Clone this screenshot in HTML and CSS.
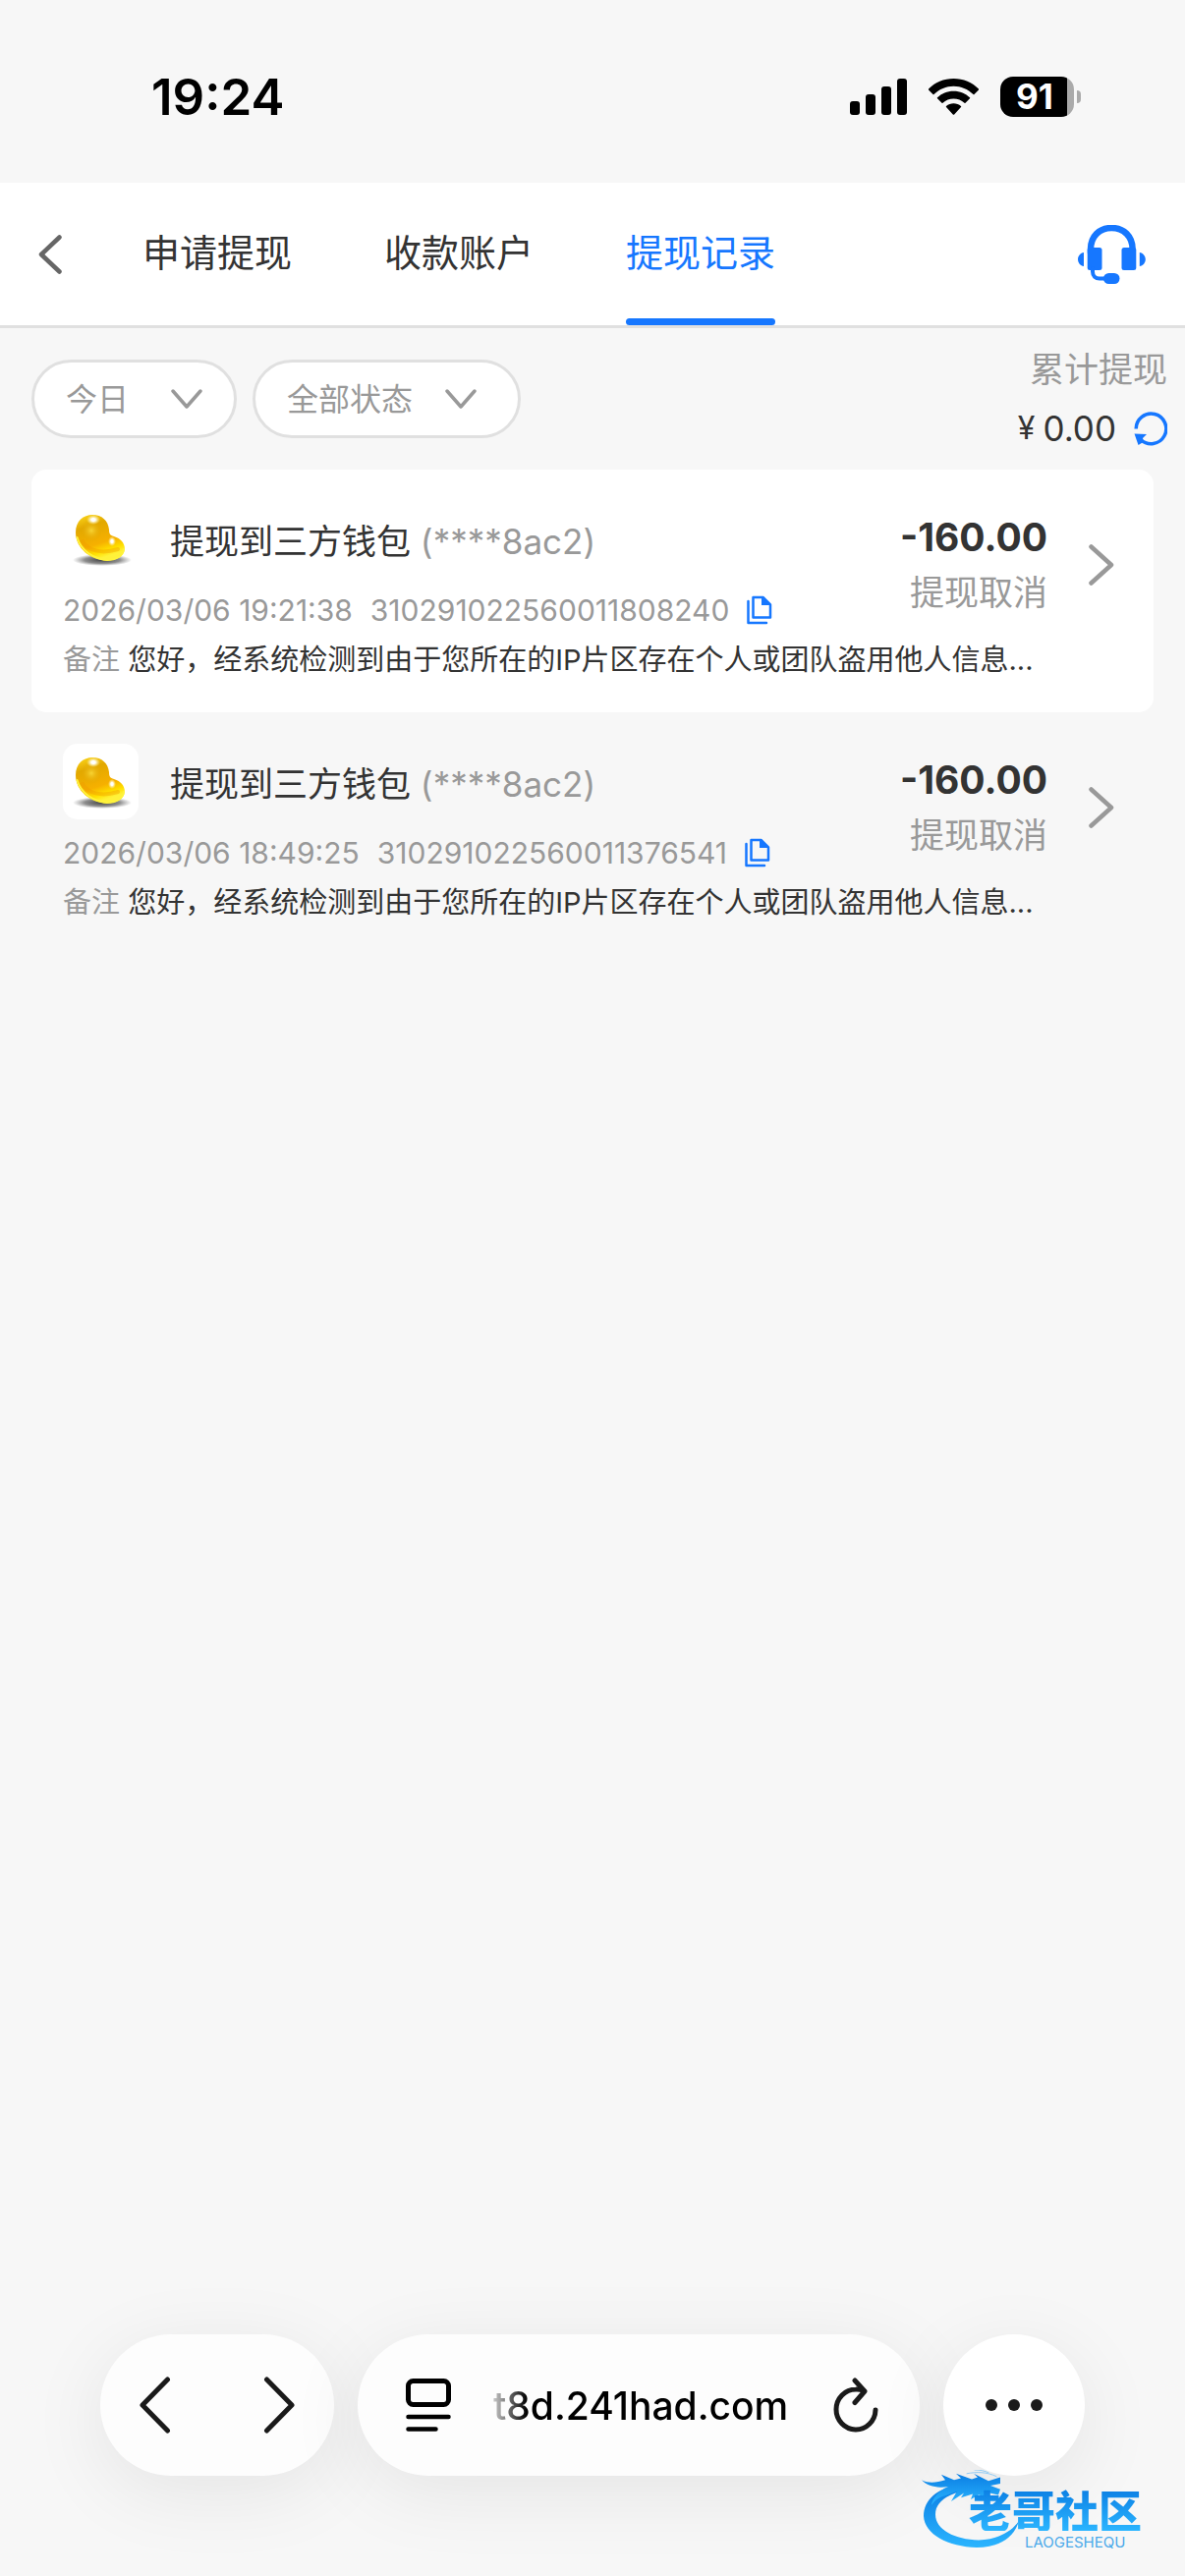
FILE: index.html
```html
<!DOCTYPE html>
<html lang="zh-CN">
<head>
  <meta charset="UTF-8">
  <meta name="viewport" content="width=device-width, initial-scale=1">
  <title>提现记录</title>
  <link rel="stylesheet" href="styles.css">
</head>
<body>

  <div class="status-bar">
    <span class="time">19:24</span>
    <div class="status-icons">
      <svg width="58" height="37" viewBox="0 0 58 37">
        <rect x="0" y="23" width="10" height="14" rx="3"/>
        <rect x="16" y="16" width="10" height="21" rx="3"/>
        <rect x="32" y="8" width="10" height="29" rx="3"/>
        <rect x="48" y="0" width="10" height="37" rx="3"/>
      </svg>
      <svg width="51" height="37" viewBox="0 0 51 37">
        <path d="M25.500 0C35.500 0 44.500 4 51 10.500Q51.400 11 51 11.500L46.500 16Q46 16.400 45.500 16C40 10.700 33 7.700 25.500 7.700S11 10.700 5.500 16Q5 16.400 4.500 16L0 11.500Q-.4 11 0 10.500C6.500 4 15.500 0 25.500 0Z"/>
        <path d="M25.500 12.700C32 12.700 37.800 15.200 42 19.300Q42.500 19.800 42 20.300L37.500 24.800Q37 25.200 36.500 24.800C33.500 22 29.700 20.500 25.500 20.500S17.500 22 14.500 24.800Q14 25.200 13.500 24.800L9 20.300Q8.500 19.800 9 19.300C13.200 15.200 19 12.700 25.500 12.700Z"/>
        <path d="M25.500 25.300C28.300 25.300 30.900 26.300 33 28Q33.500 28.500 33 29L26.200 36.400Q25.500 37 24.800 36.400L18 29Q17.500 28.500 18 28C20.100 26.300 22.700 25.300 25.500 25.300Z"/>
      </svg>
      <div class="battery"><span>91</span></div>
    </div>
  </div>

  <header class="header">
    <button class="back" aria-label="返回">
      <svg width="24" height="40" viewBox="0 0 24 40"><path d="M21.500 2.500L3 20l18.500 17.500" stroke="#666" stroke-width="4.500"/></svg>
    </button>
    <nav class="tabs">
      <a href="#apply">申请提现</a>
      <a href="#account">收款账户</a>
      <a href="#records" class="active">提现记录</a>
    </nav>
    <button class="service" aria-label="客服">
      <svg width="69" height="60" viewBox="0 0 69 60">
        <path d="M13 28V24.500C13 11.500 22 3 34.300 3S55.600 11.500 55.600 24.500V28" stroke="#1677ff" stroke-width="6.500"/>
        <g fill="#1677ff">
          <rect x="9.700" y="23" width="14.800" height="23" rx="2.500"/>
          <rect x="44.500" y="23" width="14.800" height="23" rx="2.500"/>
          <path d="M6 28v14C2.500 41.500 0 38.500 0 35s2.500-6.500 6-7zM62.800 28v14c3.500-.5 6-3.500 6-7s-2.500-6.500-6-7z"/>
          <rect x="26" y="49" width="16.500" height="11" rx="5.500"/>
        </g>
        <path d="M15 44v3.500c0 4.500 3 7 7 7h7" stroke="#1677ff" stroke-width="4"/>
      </svg>
    </button>
  </header>

  <main>
    <div class="filter-bar">
      <div class="select-box">
        <select aria-label="日期"><option>今日</option></select>
        <svg width="32" height="20" viewBox="0 0 32 20"><path d="M2 2l14 16L30 2" stroke="#999" stroke-width="3.500"/></svg>
      </div>
      <div class="select-box select-status">
        <select aria-label="状态"><option>全部状态</option></select>
        <svg width="32" height="20" viewBox="0 0 32 20"><path d="M2 2l14 16L30 2" stroke="#999" stroke-width="3.500"/></svg>
      </div>
      <div class="total">
        <div class="total-label">累计提现</div>
        <div class="total-value">
          <span class="currency">¥</span><span>0.00</span>
          <button aria-label="刷新">
            <svg width="34" height="36" viewBox="0 0 34 36">
              <path d="M2.200 18.500A15.300 15.300 0 1 1 7 29.500" stroke="#1677ff" stroke-width="3.500" stroke-linecap="butt"/>
              <path d="M.5 23.500l12.500.5-4 4 .5 4-5 3z" fill="#1677ff"/>
            </svg>
          </button>
        </div>
      </div>
    </div>

    <article class="record record-white">
      <div class="record-top">
        <div class="record-info">
          <div class="record-title">
            <div class="coin">
              <svg width="77" height="77" viewBox="0 0 77 77">
                <defs>
                  <linearGradient id="gold" x1="0" y1="0" x2=".35" y2="1">
                    <stop offset="0" stop-color="#ffdc1e"/>
                    <stop offset=".3" stop-color="#e2a800"/>
                    <stop offset=".7" stop-color="#f6b000"/>
                    <stop offset=".88" stop-color="#ffe000"/>
                    <stop offset="1" stop-color="#fff23a"/>
                  </linearGradient>
                  <radialGradient id="glow">
                    <stop offset="0" stop-color="#f8d433"/>
                    <stop offset="1" stop-color="#e0a400" stop-opacity="0"/>
                  </radialGradient>
                  <radialGradient id="shine">
                    <stop offset=".3" stop-color="#fff"/>
                    <stop offset="1" stop-color="#fff3a0" stop-opacity="0"/>
                  </radialGradient>
                  <radialGradient id="shade">
                    <stop offset="0" stop-color="#222" stop-opacity=".85"/>
                    <stop offset=".6" stop-color="#333" stop-opacity=".55"/>
                    <stop offset="1" stop-color="#555" stop-opacity="0"/>
                  </radialGradient>
                </defs>
                <ellipse cx="40" cy="60" rx="30" ry="6" fill="url(#shade)"/>
                <path d="M13 32C13 20 21 14 30 14C40 14 46 20 47 29C47 33 48 35 52 36C59 38 63 43 63 49C62 57 54 61 45 61C28 60 13 48 13 32Z" fill="url(#gold)"/>
                <path d="M14.500 37C18 50 31 59 45 59.500C54 59.500 61 56 62 49" stroke="#fff33c" stroke-width="2"/>
                <path d="M20 41C26 51 40 54 56 49" stroke="#ef9a00" stroke-width="4" opacity=".4"/>
                <circle cx="29" cy="30" r="11" fill="url(#glow)"/>
                <ellipse cx="31" cy="19" rx="7" ry="5" fill="url(#shine)"/>
                <ellipse cx="50" cy="41" rx="4" ry="5" fill="url(#shine)"/>
              </svg>
            </div>
            <h2>提现到三方钱包 <span>(****8ac2)</span></h2>
          </div>
          <div class="record-meta">
            <span>2026/03/06 19:21:38</span>
            <span>310291022560011808240</span>
            <button aria-label="复制">
              <svg width="26" height="30" viewBox="0 0 26 30">
                <path d="M1.500 6V28H20" stroke="#1677ff" stroke-width="2.500"/>
                <path d="M6.500 2V22.500H24V9.500L16.500 2Z" stroke="#1677ff" stroke-width="2.500"/>
                <path d="M15 1V10H25Z" fill="#1677ff"/>
              </svg>
            </button>
          </div>
        </div>
        <div class="record-amount">
          <strong>-160.00</strong>
          <span>提现取消</span>
        </div>
        <svg class="arrow" width="26" height="42" viewBox="0 0 26 42"><path d="M2.500 2.500L23 21L2.500 39.500" stroke="#999" stroke-width="4.500"/></svg>
      </div>
      <p class="remark"><span>备注</span> 您好，经系统检测到由于您所在的IP片区存在个人或团队盗用他人信息...</p>
    </article>

    <article class="record">
      <div class="record-top">
        <div class="record-info">
          <div class="record-title">
            <div class="coin">
              <svg width="77" height="77" viewBox="0 0 77 77">
                <ellipse cx="40" cy="60" rx="30" ry="6" fill="url(#shade)"/>
                <path d="M13 32C13 20 21 14 30 14C40 14 46 20 47 29C47 33 48 35 52 36C59 38 63 43 63 49C62 57 54 61 45 61C28 60 13 48 13 32Z" fill="url(#gold)"/>
                <path d="M14.500 37C18 50 31 59 45 59.500C54 59.500 61 56 62 49" stroke="#fff33c" stroke-width="2"/>
                <path d="M20 41C26 51 40 54 56 49" stroke="#ef9a00" stroke-width="4" opacity=".4"/>
                <circle cx="29" cy="30" r="11" fill="url(#glow)"/>
                <ellipse cx="31" cy="19" rx="7" ry="5" fill="url(#shine)"/>
                <ellipse cx="50" cy="41" rx="4" ry="5" fill="url(#shine)"/>
              </svg>
            </div>
            <h2>提现到三方钱包 <span>(****8ac2)</span></h2>
          </div>
          <div class="record-meta">
            <span>2026/03/06 18:49:25</span>
            <span>310291022560011376541</span>
            <button aria-label="复制">
              <svg width="26" height="30" viewBox="0 0 26 30">
                <path d="M1.500 6V28H20" stroke="#1677ff" stroke-width="2.500"/>
                <path d="M6.500 2V22.500H24V9.500L16.500 2Z" stroke="#1677ff" stroke-width="2.500"/>
                <path d="M15 1V10H25Z" fill="#1677ff"/>
              </svg>
            </button>
          </div>
        </div>
        <div class="record-amount">
          <strong>-160.00</strong>
          <span>提现取消</span>
        </div>
        <svg class="arrow" width="26" height="42" viewBox="0 0 26 42"><path d="M2.500 2.500L23 21L2.500 39.500" stroke="#999" stroke-width="4.500"/></svg>
      </div>
      <p class="remark"><span>备注</span> 您好，经系统检测到由于您所在的IP片区存在个人或团队盗用他人信息...</p>
    </article>
  </main>

  <footer class="browser-bar">
    <div class="pill pill-nav">
      <button aria-label="后退">
        <svg width="32" height="58" viewBox="0 0 32 58"><path d="M28.500 3L3 29l25.500 26" stroke="#1a1a1a" stroke-width="5"/></svg>
      </button>
      <button aria-label="前进">
        <svg width="32" height="58" viewBox="0 0 32 58"><path d="M3.500 3L29 29L3.500 55" stroke="#1a1a1a" stroke-width="5"/></svg>
      </button>
    </div>
    <div class="pill pill-url">
      <button aria-label="页面菜单">
        <svg width="46" height="54" viewBox="0 0 46 54">
          <rect x="2.500" y="2.500" width="41" height="24" rx="5" stroke="#000" stroke-width="5"/>
          <path d="M2.500 39H43.500M2.500 51.500H30.500" stroke="#000" stroke-width="4.500"/>
        </svg>
      </button>
      <input type="text" value="t8d.241had.com" aria-label="网址">
      <button aria-label="重新加载">
        <svg width="46" height="56" viewBox="0 0 46 56">
          <path d="M31 13.500C28.500 12.400 25.800 11.800 23 12A20 20.500 0 1 0 43 33" stroke="#1a1a1a" stroke-width="5"/>
          <path d="M22 3L32 14L22 25.500" stroke="#1a1a1a" stroke-width="5"/>
        </svg>
      </button>
    </div>
    <button class="pill pill-more" aria-label="更多">
      <svg width="58" height="12" viewBox="0 0 58 12"><g fill="#1a1a1a"><circle cx="6" cy="6" r="6"/><circle cx="29" cy="6" r="6"/><circle cx="52" cy="6" r="6"/></g></svg>
    </button>
  </footer>

  <div class="watermark">
    <svg width="100" height="80" viewBox="0 0 100 85" preserveAspectRatio="none">
      <defs>
        <linearGradient id="blue" x1="0" y1="0" x2="0" y2="1">
          <stop offset="0" stop-color="#0a7de3"/>
          <stop offset="1" stop-color="#2bb5ff"/>
        </linearGradient>
      </defs>
      <g fill="url(#blue)">
        <path d="M30 18C12 23 2 35 2 50C3 70 27 83 56 84C78 84 94 74 99 55C91 68 76 75 58 76C34 75 14 65 14 48C14 35 26 26 45 22Z"/>
        <path d="M0 11C7 15 15 14 24 11L20 5L33 11L40 9L35 4L51 10L57 8L53 4L68 12L80 8V15L70 17L80 21L78 27L65 24L72 31L58 27L50 32L52 26L40 30L43 25L30 34L36 23L24 28C18 29 14 33 10 38C11 30 18 22 27 18C16 20 6 18 0 11Z"/>
      </g>
      <path d="M46 4C56 2 66 2 76 7M54 0C60 0 64 1 68 3" stroke="#8fcaf5" stroke-width="1"/>
    </svg>
    <div class="watermark-text">
      <b>老哥社区</b>
      <small>LAOGESHEQU</small>
    </div>
  </div>

</body>
</html>
```

FILE: styles.css
```css
* { box-sizing: border-box; }
body {
  margin: 0;
  min-height: 100vh;
  display: flex;
  flex-direction: column;
  position: relative;
  background: #f7f7f7;
  color: #333;
  font-family: Inter, "Noto Sans CJK SC", sans-serif;
  font-size: 35px;
}
svg { display: block; flex-shrink: 0; fill: none; stroke-linecap: round; stroke-linejoin: round; }
button { padding: 0; border: none; background: none; font: inherit; cursor: pointer; }
main { flex: 1; }

/* status bar */
.status-bar {
  height: 186px;
  padding: 10px 113px 0 154px;
  display: flex;
  align-items: center;
  justify-content: space-between;
  color: #000;
}
.time { font-size: 51px; font-weight: 600; }
.status-icons { display: flex; align-items: center; gap: 22px; }
.status-icons svg { fill: #000; }
.battery {
  position: relative;
  width: 75px;
  height: 41px;
  padding-right: 5px;
  border-radius: 13px;
  background: linear-gradient(to right, #000 68px, #aaa 68px);
  color: #fff;
  font-size: 35px;
  font-weight: 700;
  line-height: 41px;
  text-align: center;
}
.battery::after {
  content: "";
  position: absolute;
  right: -7px;
  top: 14px;
  width: 4px;
  height: 13px;
  border-radius: 0 4px 4px 0;
  background: #aaa;
}

/* header */
.header {
  height: 148px;
  padding: 0 40px 0 39px;
  display: flex;
  align-items: center;
  background: #fff;
  border-bottom: 3px solid #e0e0e0;
}
.tabs { flex: 1; align-self: stretch; display: flex; gap: 94px; margin-left: 82px; }
.tabs a {
  position: relative;
  display: flex;
  align-items: center;
  padding-bottom: 8px;
  color: #333;
  font-size: 38px;
  text-decoration: none;
}
.tabs a.active { color: #1677ff; }
.tabs a.active::after {
  content: "";
  position: absolute;
  left: 0;
  right: 0;
  bottom: 0;
  height: 7px;
  border-radius: 4px;
  background: #1677ff;
}

/* filters */
.filter-bar { display: flex; align-items: center; gap: 16px; padding: 12px 18px 12px 32px; }
.select-box { position: relative; }
.select-box select {
  appearance: none;
  display: block;
  height: 80px;
  padding: 0 106px 0 32px;
  border: 3px solid #e0e0e0;
  border-radius: 40px;
  background: #fff;
  color: #999;
  font: inherit;
  font-size: 32px;
}
.select-box svg { position: absolute; right: 35px; top: 30px; pointer-events: none; }
.select-status svg { right: 45px; }
.total { margin-left: auto; text-align: right; line-height: 60px; }
.total-label { color: #999; }
.total-value { display: flex; align-items: center; justify-content: flex-end; }
.currency { margin-right: 8px; font-size: 32px; }
.total-value button { margin-left: 18px; }

/* records */
.record { margin: 0 32px; padding: 32px 40px 33px 32px; border-radius: 15px; }
.record-white { background: #fff; }
.record-top { display: flex; align-items: center; }
.record-info { flex: 1; min-width: 0; }
.record-title { display: flex; align-items: center; gap: 32px; }
.coin { border-radius: 15px; background: #fff; }
.record-title h2 { margin: 0; font-size: 35px; font-weight: 400; white-space: nowrap; }
.record-title h2 span { color: #999; }
.record-meta {
  display: flex;
  align-items: center;
  gap: 18px;
  margin-top: 15px;
  color: #999;
  font-size: 30px;
  line-height: 38px;
  white-space: nowrap;
}
.record-amount { display: flex; flex-direction: column; text-align: right; line-height: 57px; }
.record-amount strong { font-size: 39px; }
.record-amount span { color: #999; }
.arrow { margin-left: 42px; }
.remark { margin: 12px 0 0; font-size: 29px; line-height: 40px; white-space: nowrap; }
.remark span { color: #999; }

/* browser toolbar */
.browser-bar { display: flex; gap: 24px; padding: 0 102px 102px; }
.pill {
  height: 144px;
  display: flex;
  align-items: center;
  border-radius: 72px;
  background: #fdfdfd;
  box-shadow: 0 16px 80px rgba(0, 0, 0, 0.08);
}
.pill-nav { width: 238px; padding: 0 40px; justify-content: space-between; }
.pill-url { flex: 1; min-width: 0; padding: 0 42px 0 49px; }
.pill-url input {
  flex: 1;
  min-width: 0;
  margin: 0 34px 0 43px;
  padding: 0;
  border: none;
  outline: none;
  background: none;
  color: #000;
  font: inherit;
  font-size: 39px;
  font-weight: 500;
  -webkit-mask-image: linear-gradient(to right, rgba(0, 0, 0, 0.2), #000 34px);
  mask-image: linear-gradient(to right, rgba(0, 0, 0, 0.2), #000 34px);
}
.pill-more { width: 144px; justify-content: center; background: #fff; }

/* community mark over the corner */
.watermark { position: absolute; right: 18px; bottom: 28px; width: 250px; display: flex; align-items: flex-end; }
.watermark-text { margin-left: -52px; display: flex; flex-direction: column; align-items: flex-start; gap: 6px; }
.watermark b {
  font-family: "Noto Sans CJK SC", sans-serif;
  font-size: 44px;
  font-weight: 900;
  line-height: 44px;
  white-space: nowrap;
  color: transparent;
  background: linear-gradient(#0a7de3, #2bb5ff);
  -webkit-background-clip: text;
  background-clip: text;
}
.watermark small { margin-left: 57px; color: #4aa9ea; font-size: 15px; line-height: 12px; }
```
